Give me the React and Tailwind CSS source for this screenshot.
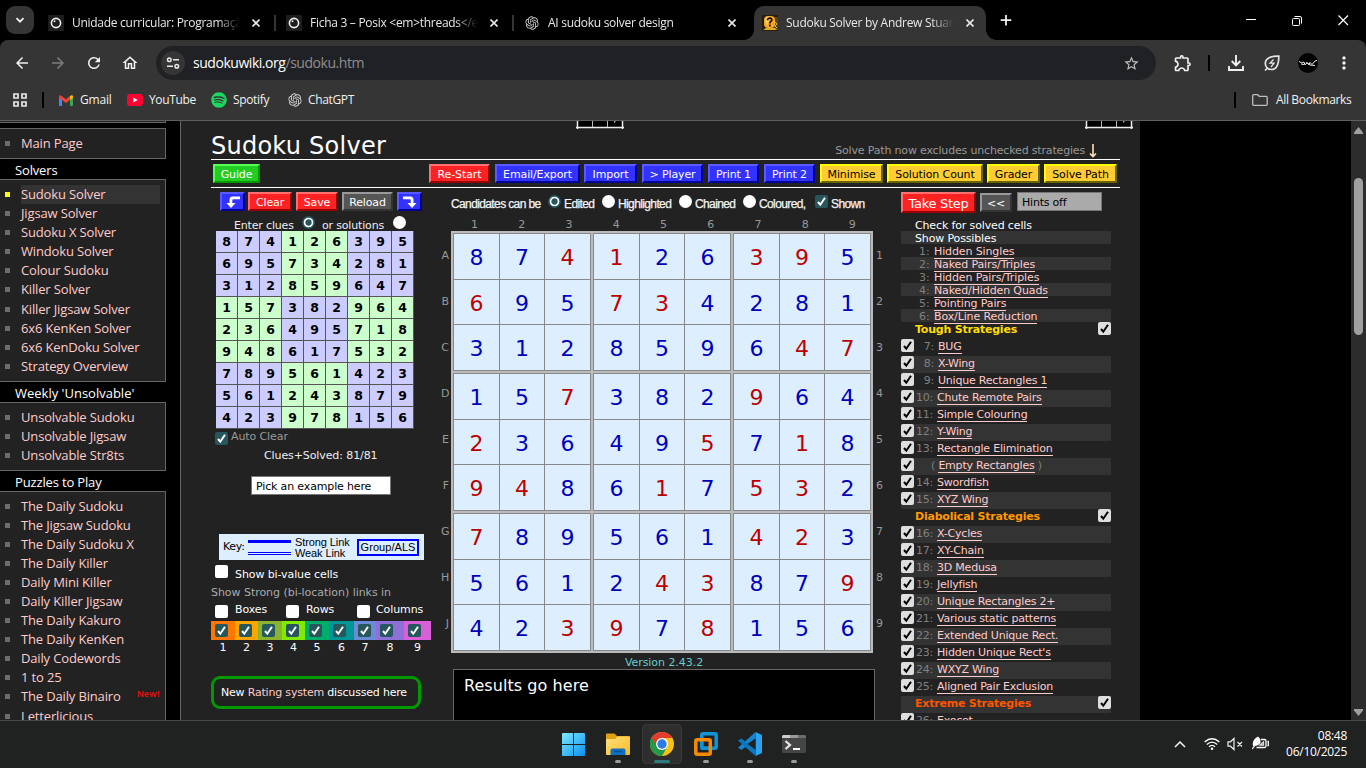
import React from "react";
import { MdArrowBack, MdArrowForward, MdRefresh, MdOutlineHome, MdStarBorder, MdOutlineExtension, MdMoreVert } from "react-icons/md";
import { RiOpenaiFill } from "react-icons/ri";
import { FaSpotify } from "react-icons/fa";

const SOLUTION = ["874126395", "695734281", "312859647", "157382964", "236495718", "948617532", "789561423", "561243879", "423978156"];
const SOLVED = ["001100110", "100110000", "000000011", "001000100", "100001010", "110010110", "100000110", "000011001", "001101000"];

/* ---------- browser chrome ---------- */

function CloseX() {
  return (
    <svg className="size-2 shrink-0" viewBox="0 0 8 8" fill="none" stroke="#e8e8e8" strokeWidth="1.6">
      <path d="M0.5 0.5L7.5 7.5M7.5 0.5L0.5 7.5" />
    </svg>
  );
}

function MoodleIcon() {
  return (
    <span className="flex size-4 shrink-0 items-center justify-center bg-[#1d1d1d]">
      <svg className="size-3" viewBox="0 0 12 12" fill="none">
        <circle cx="6" cy="6" r="4.6" stroke="#efefef" strokeWidth="1.6" />
        <circle cx="4.5" cy="4.200" r="1" fill="#efefef" />
      </svg>
    </span>
  );
}

function SudokuIcon() {
  return (
    <svg className="size-4 shrink-0" viewBox="0 0 16 16">
      <rect width="16" height="16" fill="#2a1c0c" />
      <path d="M12 2h4v13h-4z" fill="#5a4310" />
      <path d="M1 15l3-2h9l2 2z" fill="#d8b020" />
      <rect x="2" y="1" width="11" height="12" rx="4" fill="#f5a623" />
      <path d="M3 5c0-3 3-4 5-3l-3 9z" fill="#ffcf70" />
      <path d="M5.500 5.200c0-3 4.800-2.600 4.300 0-.3 1.300-2 1.300-2 3.200" fill="none" stroke="#1a0d00" strokeWidth="1.7" />
      <rect x="7" y="9.600" width="1.800" height="1.800" fill="#1a0d00" />
      <path d="M13 7l2 2-2 2 2 2" stroke="#e0b52c" fill="none" />
    </svg>
  );
}

function Tab({ icon, title, active, sep }) {
  return (
    <div className="relative flex h-[34px] w-[238px] shrink-0 items-center pl-2">
      {active && (
        <div className="absolute inset-y-0 left-0 w-[232px] rounded-t-[10px] bg-[#353535]">
          <div className="absolute bottom-0 -left-2.5 size-2.5 bg-[radial-gradient(circle_at_0_0,#000_9.5px,#353535_10px)]" />
          <div className="absolute -right-2.5 bottom-0 size-2.5 bg-[radial-gradient(circle_at_100%_0,#000_9.5px,#353535_10px)]" />
        </div>
      )}
      <div className="relative flex items-center">
        {icon}
        <span className="ml-2 w-[168px] overflow-hidden whitespace-nowrap pb-px text-[12px] tracking-[-0.28px] text-[#e8e8e8] [mask-image:linear-gradient(to_right,#000_145px,transparent_168px)]">
          {title}
        </span>
        <span className="ml-3 flex">
          <CloseX />
        </span>
      </div>
      {sep && <span className="ml-[14px] h-4 w-0.5 bg-[#353535]" />}
    </div>
  );
}

function TabStrip() {
  return (
    <div className="flex h-10 items-start bg-black pt-1.5 pl-1.5">
      <div className="flex size-7 items-center justify-center rounded-[9px] bg-[#353535]">
        <svg className="size-2.5" viewBox="0 0 10 10" fill="none" stroke="#f0f0f0" strokeWidth="1.8">
          <path d="M1.500 3.200L5 6.700L8.500 3.200" />
        </svg>
      </div>
      <div className="ml-1.5 flex">
        <Tab icon={<MoodleIcon />} title="Unidade curricular: Programação" sep />
        <Tab icon={<MoodleIcon />} title="Ficha 3 – Posix <em>threads</em>" sep />
        <Tab icon={<RiOpenaiFill className="size-4 shrink-0 text-[#d0d0d0]" />} title="AI sudoku solver design" />
        <Tab icon={<SudokuIcon />} title="Sudoku Solver by Andrew Stuart" active />
      </div>
      <svg className="mt-[8px] ml-2 size-3" viewBox="0 0 12 12" stroke="#f0f0f0" strokeWidth="1.8">
        <path d="M6 1v10.500M0.700 6.200h10.600" />
      </svg>
      <svg className="mt-[9px] ml-[234px] h-3 w-[104px]" viewBox="0 0 104 12" fill="none" stroke="#fff" strokeWidth="1">
        <path d="M0 4.500h10" />
        <rect x="46.500" y="3.500" width="7" height="7" rx="1" />
        <path d="M48.500 1.500h5.500q1.500 0 1.500 1.500v5.500" />
        <path d="M92.500 0.500l9.500 9.500M102 0.500l-9.500 9.500" strokeWidth="1.200" />
      </svg>
    </div>
  );
}

function Toolbar() {
  return (
    <div className="flex h-10 items-center rounded-t-lg bg-[#353535] pt-1.5 text-[#f0f0f0]">
      <MdArrowBack className="ml-[13px] size-[18px]" />
      <MdArrowForward className="ml-[18px] size-[18px] text-[#7d7d7d]" />
      <MdRefresh className="ml-[18px] size-[18px]" />
      <MdOutlineHome className="ml-[18px] size-[18px]" />
      <div className="ml-[17px] flex h-[34px] w-[1000px] items-center rounded-full bg-[#202124] pr-4 pl-[5px]">
        <span className="flex size-6 items-center justify-center rounded-full bg-[#353535]">
          <svg className="h-3 w-3.5" viewBox="0 0 14 12" fill="none" stroke="#e8e8e8" strokeWidth="1.500">
            <circle cx="3.300" cy="2.800" r="1.800" />
            <path d="M7 2.800h6M1 9.200h6" />
            <circle cx="10.800" cy="9.200" r="1.800" />
          </svg>
        </span>
        <span className="ml-2 whitespace-nowrap text-[14px] leading-5 tracking-[-0.46px] text-white">
          sudokuwiki.org<span className="text-[#8e8f92]">/sudoku.htm</span>
        </span>
        <MdStarBorder className="ml-auto size-[17px] text-[#c0c0c0]" />
      </div>
      <MdOutlineExtension className="ml-[17px] size-5" />
      <span className="ml-[15px] h-4 w-0.5 bg-black" />
      <svg className="ml-[18px] size-4" viewBox="0 0 16 16" fill="none" stroke="#f0f0f0" strokeWidth="1.900">
        <path d="M8 0v10M3.700 6L8 10.300L12.300 6M1 11v4h14v-4" />
      </svg>
      <svg className="ml-5 size-4" viewBox="0 0 16 16" fill="none" stroke="#e4e4e4" strokeWidth="1.700">
        <path d="M14.800 1.200C7 1 1.300 3 1.300 8.500c0 3.500 2.700 6 6 6 6 0 7.500-6 7.500-13.300zM1 15.500l3-3" />
        <path d="M9.500 4.500L6 8.200h4L7 12" strokeWidth="1.300" />
      </svg>
      <span className="ml-[18px] flex size-5 items-center justify-center rounded-full bg-black">
        <svg className="h-2 w-[18px]" viewBox="0 0 18 8" fill="none" stroke="#eee" strokeWidth="1">
          <path d="M0 2.500l3 1.500 2-1 1 3 2-2.500 2 2 1-2 2 2 3-3.500 2-.5M2 5l3 .5M7 3.500l4 2.500 5 .5" />
        </svg>
      </span>
      <MdMoreVert className="ml-4 size-5" />
    </div>
  );
}

function Bookmarks() {
  return (
    <div className="flex h-10 items-center bg-[#353535] text-[12px] tracking-[-0.35px] text-[#f0f0f0]">
      <svg className="ml-[13px] size-3.5" viewBox="0 0 14 14" fill="none" stroke="#e8e8e8" strokeWidth="1.700">
        <path d="M1 1h4v4h-4zM9 1h4v4h-4zM1 9h4v4h-4zM9 9h4v4h-4z" />
      </svg>
      <span className="ml-[15px] h-4 w-0.5 bg-black" />
      <svg className="ml-[15px] h-[11px] w-3.5" viewBox="0 0 14 11">
        <path d="M0 1.500L3 3.500V11H1Q0 11 0 10z" fill="#4285f4" />
        <path d="M14 1.500L11 3.500V11h2q1 0 1-1z" fill="#34a853" />
        <path d="M11 1l1.500-.8Q14 0 14 1.500V3L11 5z" fill="#fbbc04" />
        <path d="M0 3V1.500Q0 0 1.500.2L7 4.200 11 1v4L7 8 0 3z" fill="#ea4335" />
      </svg>
      <span className="ml-[7px] w-[47px] tracking-[-0.2px]">Gmail</span>
      <svg className="h-3 w-4" viewBox="0 0 16 12">
        <rect width="16" height="12" rx="3" fill="#ff0033" />
        <path d="M6.300 3.400v5.200L10.700 6z" fill="#fff" />
      </svg>
      <span className="ml-1.5 w-[62px]">YouTube</span>
      <FaSpotify className="size-4 text-[#1ed760]" />
      <span className="ml-1.5 w-[54px]">Spotify</span>
      <RiOpenaiFill className="size-4 text-[#d8d8d8]" />
      <span className="ml-[5px]">ChatGPT</span>
      <span className="ml-auto h-4 w-0.5 bg-black" />
      <svg className="ml-4 h-3 w-4" viewBox="0 0 16 12" fill="none" stroke="#bdbdbd" strokeWidth="1.300">
        <path d="M.7 1.700q0-1 1-1h4l1.500 1.600h7q1 0 1 1v7q0 1-1 1h-12.500q-1 0-1-1z" />
      </svg>
      <span className="ml-2 w-[90px] whitespace-nowrap">All Bookmarks</span>
    </div>
  );
}

/* ---------- sidebar ---------- */

function SideItem({ label, active, isNew }) {
  return (
    <div className="flex h-[19.1px] items-center pl-[5px] text-[13px] text-[#ffcccc]">
      <span className={active ? "size-[5px] bg-[#ffff00]" : "size-[5px] bg-[#6c6c6c]"} />
      <span className={active ? "ml-[11px] h-[19px] w-[139px] bg-[#333] leading-[19px] whitespace-nowrap" : "ml-[11px] whitespace-nowrap leading-[19px]"}>{label}</span>
      {isNew && <span className="mb-[5px] ml-auto pr-[5px] font-[Liberation_Sans] text-[9.500px] font-bold tracking-[0.1px] text-[#dd1111]">New!</span>}
    </div>
  );
}

function SidePanel({ items, active, last }) {
  return (
    <div className={"w-[166px] border-t border-r border-b border-[#666] bg-[#222] " + (last ? "pt-[4.7px] pb-[5px]" : "pt-[4.9px] pb-[4.9px]")}>
      {items.map((t) => (
        <SideItem key={t} label={t} active={t === active} isNew={t === "The Daily Binairo"} />
      ))}
    </div>
  );
}

function SideHeading({ children }) {
  return <div className="h-5 pl-[15px] text-[13px] leading-[23px] whitespace-nowrap text-white">{children}</div>;
}

function Sidebar() {
  return (
    <div className="h-[599px] w-[180px] shrink-0 overflow-hidden bg-black font-['Open_Sans'] tracking-[-0.15px]">
      <div className="h-0.5 w-[166px] border-r border-b border-[#666] bg-[#222]" />
      <div className="mt-[5px] h-[31px] w-[166px] border-t border-r border-b border-[#666] bg-[#222] pt-[5px]">
        <SideItem label="Main Page" />
      </div>
      <SideHeading>Solvers</SideHeading>
      <SidePanel
        active="Sudoku Solver"
        items={["Sudoku Solver", "Jigsaw Solver", "Sudoku X Solver", "Windoku Solver", "Colour Sudoku", "Killer Solver", "Killer Jigsaw Solver", "6x6 KenKen Solver", "6x6 KenDoku Solver", "Strategy Overview"]}
      />
      <div className="tracking-[0px]"><SideHeading>Weekly 'Unsolvable'</SideHeading></div>
      <SidePanel items={["Unsolvable Sudoku", "Unsolvable Jigsaw", "Unsolvable Str8ts"]} />
      <SideHeading>Puzzles to Play</SideHeading>
      <SidePanel
        last
        items={["The Daily Sudoku", "The Jigsaw Sudoku", "The Daily Sudoku X", "The Daily Killer", "Daily Mini Killer", "Daily Killer Jigsaw", "The Daily Kakuro", "The Daily KenKen", "Daily Codewords", "1 to 25", "The Daily Binairo", "Letterlicious"]}
      />
    </div>
  );
}

/* ---------- solver controls ---------- */

const TONES = {
  blue: "bg-[#3333ff] border-t-[#5a5aff] border-l-[#5a5aff] border-r-[#000099] border-b-[#000099] text-white",
  red: "bg-[#ff2222] border-t-[#ff7070] border-l-[#ff7070] border-r-[#990000] border-b-[#990000] text-white",
  green: "bg-[#22cc22] border-t-[#55ff55] border-l-[#55ff55] border-r-[#009900] border-b-[#009900] text-white",
  yellow: "bg-[#ffcc33] border-t-[#ffff00] border-l-[#ffff00] border-r-[#666600] border-b-[#666600] text-black",
  grey: "bg-[#555] border-t-[#999] border-l-[#999] border-r-[#333] border-b-[#333] text-white",
};

function Btn({ tone, className, children }) {
  return (
    <span className={"flex h-[19px] shrink-0 items-center justify-center border-2 pt-px text-[11px] leading-none tracking-[-0.12px] whitespace-nowrap " + TONES[tone] + " " + className}>
      {children}
    </span>
  );
}

function Radio({ on, className }) {
  return (
    <span className={"flex size-[13px] shrink-0 items-center justify-center rounded-full " + (on ? "bg-[#26575c] " : "bg-white ") + className}>
      {on && (
        <svg className="size-[13px]" viewBox="0 0 13 13">
          <circle cx="6.500" cy="6.500" r="4" fill="#26575c" stroke="#fff" strokeWidth="1.700" />
        </svg>
      )}
    </span>
  );
}

function Check({ kind, className }) {
  const bg = kind === "on" ? "bg-[#26575c] " : kind === "grey" ? "bg-[#dedede] " : "bg-white ";
  return (
    <span className={"flex size-[13px] shrink-0 rounded-[2px] " + bg + (className || "")}>
      {kind && (
        <svg className="size-[13px]" viewBox="0 0 13 13" fill="none" stroke={kind === "on" ? "#fff" : "#000"} strokeWidth="2">
          <path d="M3 7L5.300 9.700L10 2.800" />
        </svg>
      )}
    </span>
  );
}

function TurnArrow({ flip }) {
  return (
    <svg className={"-mt-px h-3.5 w-4" + (flip ? " -scale-x-100" : "")} viewBox="0 0 16 14">
      <path d="M15 1.500H7.500Q4.500 1.500 4.500 5V8H1.500L6 13L10.500 8H7.300V5.500Q7.300 4.300 8.500 4.300H15z" fill="#fff" />
    </svg>
  );
}

function MiniGrid() {
  return (
    <div className="ml-[5px] grid w-[198px] grid-cols-9">
      {SOLUTION.flatMap((row, r) =>
        [...row].map((d, c) => (
          <span
            key={r + "-" + c}
            className={"flex size-[22px] items-center justify-center border-r border-b border-[#555] pt-[1.500px] text-[12.500px] leading-none font-bold text-black " + ((Math.floor(r / 3) + Math.floor(c / 3)) % 2 ? "bg-[#ccffcc]" : "bg-[#ccccff]")}
          >
            {d}
          </span>
        ))
      )}
    </div>
  );
}

const SWATCHES = [
  ["w-6", "bg-[#ff7700]"], ["w-[23px]", "bg-[#ffa500]"], ["w-6", "bg-[#8ab42f]"],
  ["w-[23px]", "bg-[#82ea00]"], ["w-6", "bg-[#00ae6c]"], ["w-[25px]", "bg-[#009698]"],
  ["w-[22px]", "bg-[#6c8bd6]"], ["w-7", "bg-[#8f6fd8]"], ["w-[27px]", "bg-[#d95fd9]"],
];

function Swatches() {
  return (
    <div>
      <div className="flex h-[19px] w-[220px]">
        {SWATCHES.map(([w, bg]) => (
          <span key={bg} className={"flex items-center pl-1 " + w + " " + bg}>
            <Check kind="on" />
          </span>
        ))}
      </div>
      <div className="flex h-[14px] w-[220px] text-[11px] leading-[16px] text-white">
        {SWATCHES.map(([w, bg], i) => (
          <span key={bg} className={"text-center " + w}>{i + 1}</span>
        ))}
      </div>
    </div>
  );
}

function LeftColumn() {
  return (
    <div className="h-[532px] w-[230px] shrink-0 overflow-hidden text-[11px] tracking-[-0.1px] whitespace-nowrap text-[#eee]">
      <div className="mt-1 ml-[9px] flex h-[19px]">
        <Btn tone="blue" className="w-[25px]"><TurnArrow /></Btn>
        <Btn tone="red" className="ml-[3px] w-11">Clear</Btn>
        <Btn tone="red" className="ml-1 w-[42px]">Save</Btn>
        <Btn tone="grey" className="ml-1 w-[51px]">Reload</Btn>
        <Btn tone="blue" className="ml-1 w-[25px]"><TurnArrow flip /></Btn>
      </div>
      <div className="flex h-5 pl-[23px]">
        <span className="w-[68px] pt-2 leading-[14px] tracking-[-0.17px]">Enter clues</span>
        <Radio on className="mt-[5px]" />
        <span className="ml-[7px] w-[71px] pt-2 leading-[14px] tracking-[-0.17px]">or solutions</span>
        <Radio className="mt-[5px]" />
      </div>
      <MiniGrid />
      <div className="flex h-[18px] pl-1">
        <Check kind="on" className="mt-[3px]" />
        <span className="ml-[3px] leading-[15px] text-[#999]">Auto Clear</span>
      </div>
      <div className="h-4 pl-[53px] leading-[18px]">Clues+Solved: 81/81</div>
      <div className="mt-[13px] ml-10 h-[19px] w-[140px] border border-[#777] bg-white pl-1 leading-[19px] tracking-[-0.15px] text-black">Pick an example here</div>
      <div className="mt-[39px] ml-2 flex h-[26px] w-[205px] items-center bg-[#ddeeff] pl-1 text-black">
        <span className="w-[25px] tracking-[-0.3px]">Key:</span>
        <svg className="h-4 w-[43px]" viewBox="0 0 43 16">
          <rect y="1" width="43" height="3" fill="#0000ff" />
          <rect y="13" width="43" height="1" fill="#0000ff" />
          <rect y="15" width="43" height="1" fill="#0000ff" />
        </svg>
        <span className="ml-1 w-[62px] pt-px font-[Liberation_Sans] text-[11px] leading-[11px] tracking-[-0.1px]">Strong Link<br />Weak Link</span>
        <span className="flex h-[17px] w-[62px] items-center justify-center border-2 border-[#0000ff] font-[Liberation_Sans] text-[11px] tracking-[0.05px]">Group/ALS</span>
      </div>
      <div className="mt-[5px] flex h-[19px] pl-1">
        <Check />
        <span className="ml-[7px] pt-0.5 leading-[15px] text-white">Show bi-value cells</span>
      </div>
      <div className="mt-0.5 h-4 leading-[14px] tracking-[-0.04px] text-[#aaa]">Show Strong (bi-location) links in</div>
      <div className="mt-0.5 flex h-[17px] pl-1 leading-[12px] text-white">
        <Check className="mt-px" /><span className="ml-[7px] w-[51px]">Boxes</span>
        <Check className="mt-px" /><span className="ml-[7px] w-[51px]">Rows</span>
        <Check className="mt-px" /><span className="ml-1.5">Columns</span>
      </div>
      <Swatches />
      <div className="mt-[22px] flex h-[33px] w-[210px] items-center rounded-[9px] border-3 border-[#009900] pt-0.5 pl-[7px] tracking-[-0.19px] text-white">
        <span>New <span className="text-[#ffcccc]">Rating system</span> discussed here</span>
      </div>
    </div>
  );
}

function Board() {
  return (
    <div className="grid size-[422px] grid-cols-3 gap-0.5 bg-[#bbb] p-0.5">
      {[0, 1, 2, 3, 4, 5, 6, 7, 8].map((b) => (
        <div key={b} className="grid size-[138px] grid-cols-[45px_44px_45px] grid-rows-[45px_44px_45px] gap-px border border-[#888] bg-[#888]">
          {[0, 1, 2, 3, 4, 5, 6, 7, 8].map((k) => {
            const r = Math.floor(b / 3) * 3 + Math.floor(k / 3);
            const c = (b % 3) * 3 + (k % 3);
            return (
              <span key={k} className={"flex items-center justify-center bg-[#ddeeff] pt-[3px] text-[22px] leading-none " + (SOLVED[r][c] === "1" ? "text-[#bb0000]" : "text-[#0000bb]")}>
                {SOLUTION[r][c]}
              </span>
            );
          })}
        </div>
      ))}
    </div>
  );
}

function CenterColumn() {
  return (
    <div className="w-[446px] shrink-0 overflow-hidden">
      <div className="flex h-7 pl-2.5 font-[Liberation_Sans] text-[12px] leading-[32px] tracking-[-0.62px] whitespace-nowrap text-[#f4f4f4] [-webkit-text-stroke:0.25px_#f4f4f4]">
        <span className="w-[97px]">Candidates can be</span>
        <Radio on className="mt-[7px]" /><span className="ml-[3px] w-[38px]">Edited</span>
        <Radio className="mt-[7px]" /><span className="ml-[3px] w-[61px]">Highlighted</span>
        <Radio className="mt-[7px]" /><span className="ml-[3px] w-[48px]">Chained</span>
        <Radio className="mt-[7px]" /><span className="ml-[3px] w-[56px]">Coloured,</span>
        <Check kind="on" className="mt-[7px]" /><span className="ml-[3px]">Shown</span>
      </div>
      <div className="ml-[10px] flex h-[15px] w-[425px] text-[11px] leading-[18px] text-[#999]">
        {[1, 2, 3, 4, 5, 6, 7, 8, 9].map((n) => <span key={n} className="flex-1 text-center">{n}</span>)}
      </div>
      <div className="flex text-[11px] text-[#999]">
        <div className="flex w-2.5 flex-col pt-0.5">
          {[..."ABCDEFGHJ"].map((n) => <span key={n} className="h-[46px] pr-0.5 text-right leading-[46px]">{n}</span>)}
        </div>
        <Board />
        <div className="flex w-[14px] flex-col pt-0.5 pl-[3px]">
          {[1, 2, 3, 4, 5, 6, 7, 8, 9].map((n) => <span key={n} className="h-[46px] leading-[46px]">{n}</span>)}
        </div>
      </div>
      <div className="-mt-px h-[17px] text-center text-[11px] leading-[21px] tracking-[-0.05px] text-[#66cccc]">Version 2.43.2</div>
      <div className="ml-3 h-[70px] w-[422px] border border-[#666] bg-black pl-2.5 text-[16px] leading-[31px] tracking-[0.06px] text-white">Results go here</div>
    </div>
  );
}

function Link({ children }) {
  return <span className="border-b border-[#ffcccc] leading-[11px] text-[#ffcccc]">{children}</span>;
}

function Strategy({ n, name, shaded }) {
  return (
    <div className={"flex h-[17px] shrink-0 " + (shaded ? "bg-[#333]" : "")}>
      <Check kind="grey" />
      {n ? (
        <span className={"pt-0.5 text-right text-[#808080] " + (n < 10 ? "w-[20px]" : "w-[19px]")}>{n}:</span>
      ) : (
        <span className="w-[13px] pt-0.5" />
      )}
      <span className="pt-0.5 pl-1 text-[#808080]">
        {n ? <Link>{name}</Link> : <>( <Link>{name}</Link> )</>}
      </span>
    </div>
  );
}

function GroupHead({ name, className }) {
  return (
    <div className={"flex h-[17px] shrink-0 justify-between pl-3.5 font-bold " + className}>
      <span className="pt-0.5">{name}</span>
      <Check kind="grey" />
    </div>
  );
}

function RightColumn() {
  const basic = ["Hidden Singles", "Naked Pairs/Triples", "Hidden Pairs/Triples", "Naked/Hidden Quads", "Pointing Pairs", "Box/Line Reduction"];
  const tough = [[7, "BUG"], [8, "X-Wing"], [9, "Unique Rectangles 1"], [10, "Chute Remote Pairs"], [11, "Simple Colouring"], [12, "Y-Wing"], [13, "Rectangle Elimination"], [0, "Empty Rectangles"], [14, "Swordfish"], [15, "XYZ Wing"]];
  const diabolical = [[16, "X-Cycles"], [17, "XY-Chain"], [18, "3D Medusa"], [19, "Jellyfish"], [20, "Unique Rectangles 2+"], [21, "Various static patterns"], [22, "Extended Unique Rect."], [23, "Hidden Unique Rect's"], [24, "WXYZ Wing"], [25, "Aligned Pair Exclusion"]];
  return (
    <div className="ml-[14px] h-[532px] w-[210px] shrink-0 overflow-hidden text-[11px] leading-[12px] tracking-[-0.21px] whitespace-nowrap">
      <div className="mt-1 flex h-[26px] items-start">
        <Btn tone="red" className="h-[21px]! w-[75px] text-[13px]! tracking-[-0.3px]!">Take Step</Btn>
        <Btn tone="grey" className="mt-px ml-1 w-8">&lt;&lt;</Btn>
        <span className="ml-[5px] h-[19px] w-[85px] border border-[#777] bg-[#aaa] pl-1 leading-[19px] text-black">Hints off</span>
      </div>
      <div className="h-[13px] pl-3.5 leading-[15px] tracking-[-0.14px] text-white">Check for solved cells</div>
      <div className="h-[13px] bg-[#333] pl-3.5 leading-[15px] tracking-[-0.14px] text-white">Show Possibles</div>
      {basic.map((t, i) => (
        <div key={t} className={"flex h-[13px] pt-0.5 pl-[18px] tracking-[-0.12px] text-[#808080] " + (i % 2 ? "bg-[#333]" : "")}>
          <span className="w-[15px]">{i + 1}:</span>
          <span><Link>{t}</Link></span>
        </div>
      ))}
      <GroupHead name="Tough Strategies" className="text-[#ffdd00]" />
      {tough.map(([n, t], i) => <Strategy key={t} n={n} name={t} shaded={i % 2 === 1} />)}
      <GroupHead name="Diabolical Strategies" className="text-[#ff9900]" />
      {diabolical.map(([n, t], i) => <Strategy key={t} n={n} name={t} shaded={i % 2 === 0} />)}
      <GroupHead name="Extreme Strategies" className="bg-[#333] text-[#ff5500]" />
      <Strategy n={26} name="Exocet" />
    </div>
  );
}

function GridStub() {
  return (
    <svg className="h-2 w-12" viewBox="0 0 48 8">
      <rect x="1" width="46" height="6" fill="#000" />
      <path d="M1.500 0v8M46.500 0v8M0 6.500h48" stroke="#eee" strokeWidth="1.500" />
      <path d="M16.500 0v6M31.500 0v6" stroke="#bbb" strokeWidth="1" />
      <path d="M39 0l-.5 1.500" stroke="#ccc" strokeWidth="1.200" />
    </svg>
  );
}

function Main() {
  return (
    <div className="h-[599px] w-[960px] shrink-0 overflow-hidden border-l border-[#666] bg-[#222] pl-[30px] font-['DejaVu_Sans']">
      <div className="flex h-2 pl-[365px]">
        <GridStub />
        <div className="ml-[461px]"><GridStub /></div>
      </div>
      <div className="flex h-[31px] w-[909px] justify-between border-b border-white">
        <h1 className="text-[24px] leading-[35px] tracking-[0.25px] text-white">Sudoku Solver</h1>
        <div className="flex pt-[14px] pr-[23px] text-[11px] leading-[15px] tracking-[-0.17px] whitespace-nowrap text-[#999]">
          Solve Path now excludes unchecked strategies
          <svg className="mt-px ml-1 h-[14px] w-2" viewBox="0 0 8 14" fill="none" stroke="#ffe0b8" strokeWidth="1.600">
            <path d="M4 0v12M1 9.500L4 12.500l3-3" />
          </svg>
        </div>
      </div>
      <div className="flex h-7 w-[909px] border-b border-white pt-1 pl-0.5">
        <Btn tone="green" className="w-[47px]">Guide</Btn>
        <Btn tone="red" className="ml-[169px] w-[61px]">Re-Start</Btn>
        <Btn tone="blue" className="ml-[5px] w-[85px]">Email/Export</Btn>
        <Btn tone="blue" className="ml-1 w-[53px]">Import</Btn>
        <Btn tone="blue" className="ml-[5px] w-[61px]">&gt; Player</Btn>
        <Btn tone="blue" className="ml-[5px] w-[51px]">Print 1</Btn>
        <Btn tone="blue" className="ml-[5px] w-[51px]">Print 2</Btn>
        <Btn tone="yellow" className="ml-[5px] w-[63px]">Minimise</Btn>
        <Btn tone="yellow" className="ml-1 w-[96px]">Solution Count</Btn>
        <Btn tone="yellow" className="ml-1 w-[53px]">Grader</Btn>
        <Btn tone="yellow" className="ml-1 w-[73px]">Solve Path</Btn>
      </div>
      <div className="flex">
        <LeftColumn />
        <CenterColumn />
        <RightColumn />
      </div>
    </div>
  );
}

function Scrollbar() {
  return (
    <div className="ml-auto flex h-[599px] w-[15px] flex-col items-center bg-[#2c2c2c]">
      <svg className="mt-1.5 h-[7px] w-[9px]" viewBox="0 0 9 7"><path d="M4.500 0L9 5.500v1.500H0V5.500z" fill="#9f9f9f" /></svg>
      <span className="mt-11 h-[157px] w-[9px] rounded-full bg-[#9f9f9f]" />
      <svg className="mt-auto mb-[4px] h-[7px] w-[9px]" viewBox="0 0 9 7"><path d="M4.500 7L9 1.500V0H0v1.500z" fill="#9f9f9f" /></svg>
    </div>
  );
}

/* ---------- taskbar ---------- */

function TaskItem({ children, active, idle }) {
  return (
    <span className={"flex size-10 flex-col items-center rounded " + (active ? "border border-[#383838] bg-[#2e2e2e] pt-[7px]" : "pt-2")}>
      {children}
      {!idle && <span className={active ? "mt-1 h-[3px] w-4 rounded-full bg-[#2c7c80]" : "mt-1 h-[3px] w-1.5 rounded-full bg-[#9a9a9a]"} />}
    </span>
  );
}

function Taskbar() {
  return (
    <div className="flex h-12 border-t border-[#474747] bg-[#202121] pt-[3px] font-['Open_Sans']">
      <div className="ml-[554px] flex gap-1">
        <TaskItem idle>
          <svg className="mt-px mr-px size-[23px]" viewBox="0 0 23 23">
            <defs><linearGradient id="win" x1="0" y1="0" x2="1" y2="1"><stop offset="0" stopColor="#7eeaff" /><stop offset="1" stopColor="#0a90f0" /></linearGradient></defs>
            <path d="M0 1q0-1 1-1h10v11H0zM12 0h10q1 0 1 1v10H12zM0 12h11v11H1q-1 0-1-1zM12 12h11v10q0 1-1 1H12z" fill="url(#win)" />
          </svg>
        </TaskItem>
        <TaskItem>
          <svg className="size-6" viewBox="0 0 24 24">
            <defs><linearGradient id="fold" x1="0" y1="0" x2="1" y2="1"><stop offset="0" stopColor="#ffe083" /><stop offset="1" stopColor="#f7bb1e" /></linearGradient></defs>
            <path d="M0 2.500q0-1 1-1h7.500l2.500 2.500h12q1 0 1 1v6H0z" fill="#e0a010" />
            <path d="M0 7h9l2.500-2.500H23q1 0 1 1V22q0 1-1 1H1q-1 0-1-1z" fill="url(#fold)" />
            <path d="M4.500 23v-4.500q0-2 2-2h11q2 0 2 2V23z" fill="#0f6fc0" />
            <path d="M8 19.500h8" stroke="#0a4f94" strokeWidth="1.500" />
          </svg>
        </TaskItem>
        <TaskItem active>
          <svg className="size-6" viewBox="0 0 24 24">
            <circle cx="12" cy="12" r="12" fill="#fbc116" />
            <path d="M1.600 6A12 12 0 0 0 12 24L17.200 15 12 12 6.800 9z" fill="#229a48" />
            <path d="M1.600 6A12 12 0 0 1 22.400 6H12a6 6 0 0 0-5.200 9z" fill="#e33b2e" />
            <path d="M1.600 6L6.800 15 10 18 3 19Q-2 12 1.600 6z" fill="#229a48" />
            <circle cx="12" cy="12" r="6" fill="#fff" />
            <circle cx="12" cy="12" r="4.700" fill="#2a7ae8" />
          </svg>
        </TaskItem>
        <TaskItem>
          <svg className="size-6" viewBox="0 0 24 24" fill="none" strokeWidth="3.500">
            <rect x="7.700" y="1.800" width="14.500" height="14.500" rx="1.500" stroke="#0f95d6" />
            <rect x="1.800" y="7.700" width="14.500" height="14.500" rx="1.500" stroke="#f58a00" />
            <path d="M7.700 10v5q0 1.300 1.300 1.300h5" stroke="#0f95d6" />
          </svg>
        </TaskItem>
        <TaskItem>
          <svg className="size-6" viewBox="0 0 24 24">
            <path d="M17.500 0L24 3v18l-6.500 3z" fill="#2ba3f0" />
            <path d="M17.500 0v6.500L3.500 18 0 15.800z" fill="#1486d0" />
            <path d="M17.500 24v-6.500L3.500 6.500 0 8.500z" fill="#0a76c0" />
            <path d="M17.500 6.500L9.500 12l8 5.500z" fill="#202121" />
          </svg>
        </TaskItem>
        <TaskItem>
          <svg className="size-6" viewBox="0 0 24 24">
            <rect y="3" width="24" height="18" rx="1.500" fill="#454545" />
            <path d="M0 6V4.500Q0 3 1.500 3H8v3z" fill="#ccc" />
            <path d="M8 3h8v3H8z" fill="#999" />
            <path d="M16 3h6.500Q24 3 24 4.500V6h-8z" fill="#6c6c6c" />
            <path d="M3.500 9l4.500 4-4.500 4" stroke="#e8e8e8" strokeWidth="2.200" fill="none" />
            <path d="M11 17h7" stroke="#fff" strokeWidth="2" />
          </svg>
        </TaskItem>
      </div>
      <div className="ml-auto flex pr-[19px] text-white">
        <svg className="mt-[17px] h-[7px] w-3" viewBox="0 0 12 7" fill="none" stroke="#f4f4f4" strokeWidth="1.500"><path d="M1 6l5-5 5 5" /></svg>
        <svg className="mt-[13px] ml-[18px] h-[14px] w-4" viewBox="0 0 16 14" fill="none" stroke="#fff" strokeWidth="1.300">
          <path d="M.6 5Q8-1.500 15.400 5M2.800 7.500Q8 2.800 13.200 7.500M5 9.800Q8 7 11 9.800" />
          <circle cx="8" cy="11.700" r="1.300" fill="#fff" stroke="none" />
        </svg>
        <svg className="mt-[13px] ml-[7px] h-[14px] w-4" viewBox="0 0 16 14" fill="none" stroke="#f0f0f0" strokeWidth="1.200">
          <path d="M1 4.800h2.500L7 1.500v11L3.500 9.200H1zM10.500 5l4.500 4.500M15 5l-4.500 4.500" />
        </svg>
        <svg className="mt-[12px] ml-[9px] h-[14px] w-[17px]" viewBox="0 0 17 14" fill="none" stroke="#fff" strokeWidth="1.300">
          <path d="M9 3.500h3.500q1.500 0 1.500 1.500v5q0 1.500-1.500 1.500H4.500M15.500 5.500h.8v4h-.8" />
          <path d="M1 10Q-.5 4 6 .5q3 2 2.500 6.500Q6 10.500 1 10z" fill="#fff" stroke="none" />
          <path d="M0 13L3 9.500M8 9h3.500V6z" stroke="#ddd" />
        </svg>
        <div className="ml-[15px] flex w-[63px] flex-col items-end pt-1 text-[12px] leading-4 tracking-[-0.28px] whitespace-nowrap">
          <span>08:48</span>
          <span>06/10/2025</span>
        </div>
      </div>
    </div>
  );
}

export default function App() {
  return (
    <div className="flex h-[768px] w-[1366px] flex-col overflow-hidden bg-black font-['Open_Sans',sans-serif]">
      <TabStrip />
      <Toolbar />
      <Bookmarks />
      <div className="h-px shrink-0 bg-[#5f5f5f]" />
      <div className="flex h-[599px] shrink-0 bg-black">
        <Sidebar />
        <Main />
        <Scrollbar />
      </div>
      <Taskbar />
    </div>
  );
}
